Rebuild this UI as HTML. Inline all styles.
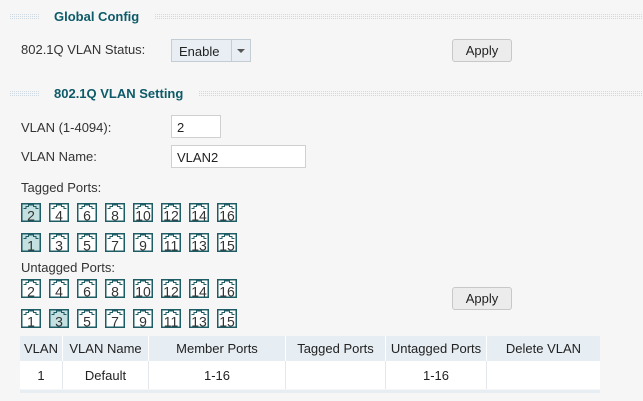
<!DOCTYPE html>
<html><head><style>
body{margin:0;width:643px;height:401px;background:#f6f6f6;font-family:"Liberation Sans",sans-serif;font-size:13px;color:#333;position:relative;overflow:hidden}
.a{position:absolute}
.hd{font-weight:bold;color:#0d5a68;font-size:13px}
.dot{position:absolute;height:5px;background-image:linear-gradient(90deg,#c6d3dd 1px,transparent 1px);background-size:2px 2px;opacity:.8}
.dot:after{content:"";position:absolute;inset:0;background-image:linear-gradient(0deg,#f6f6f6 1px,transparent 1px);background-size:2px 2px}
.btn{position:absolute;width:58px;height:21px;border:1px solid #c8c8c8;border-radius:3px;background:#ececec;text-align:center;line-height:21px;font-size:13px;color:#222}
.inp{position:absolute;background:#fff;border:1px solid #d0d0d0;height:23px;line-height:23px;padding-left:5px;font-size:13px;color:#222;box-sizing:border-box}
.p{position:absolute;width:20px;height:19px}
table{position:absolute;left:20px;top:336px;border-collapse:collapse;width:580px;font-size:13px;color:#222}
td{text-align:center;border-right:1px solid #e4e8ec;padding:0}
tr.h td{background:#e6edf3;height:25px;border-right:1px solid #fff}
tr.b td{background:#fff;height:28px}
</style></head><body>
<div class="dot" style="left:10px;top:14px;width:30px"></div>
<div class="a hd" style="left:54px;top:9px">Global Config</div>
<div class="dot" style="left:155px;top:14px;width:488px"></div>
<div class="a" style="left:21px;top:42px">802.1Q VLAN Status:</div>
<div class="a" style="left:171px;top:39px;width:80px;height:23px;border:1px solid #c4ccd4;background:#e8eef3;box-sizing:border-box">
<span class="a" style="left:7px;top:4px;color:#222">Enable</span>
<div class="a" style="left:59px;top:0;width:1px;height:21px;background:#c4ccd4"></div>
<div class="a" style="left:65px;top:9px;width:0;height:0;border-left:4px solid transparent;border-right:4px solid transparent;border-top:4px solid #555"></div></div>
<div class="btn" style="left:452px;top:39px">Apply</div>
<div class="dot" style="left:10px;top:91px;width:30px"></div>
<div class="a hd" style="left:54px;top:86px">802.1Q VLAN Setting</div>
<div class="dot" style="left:199px;top:91px;width:444px"></div>
<div class="a" style="left:21px;top:120px">VLAN (1-4094):</div>
<div class="inp" style="left:171px;top:115px;width:50px">2</div>
<div class="a" style="left:21px;top:149px">VLAN Name:</div>
<div class="inp" style="left:171px;top:145px;width:135px">VLAN2</div>
<div class="a" style="left:21px;top:180px">Tagged Ports:</div>
<div class="a" style="left:21px;top:260px">Untagged Ports:</div>
<div class="btn" style="left:452px;top:287px">Apply</div>
<div id="ports"></div>
<table><tr class="h"><td style="width:42px">VLAN</td><td style="width:85px">VLAN Name</td><td style="width:136px">Member Ports</td><td style="width:99px">Tagged Ports</td><td style="width:100px">Untagged Ports</td><td style="border-right:none">Delete VLAN</td></tr>
<tr class="b"><td>1</td><td>Default</td><td>1-16</td><td></td><td>1-16</td><td style="border-right:none"></td></tr></table>
<div class="a" style="left:20px;top:390px;width:580px;height:3px;background:#e6edf3"></div>
<script>
var rows=[[203,[2,4,6,8,10,12,14,16],[2]],[233,[1,3,5,7,9,11,13,15],[1]],[279,[2,4,6,8,10,12,14,16],[]],[309,[1,3,5,7,9,11,13,15],[3]]];
var h='';rows.forEach(function(r){r[1].forEach(function(n,i){var x=21+i*28;var sel=r[2].indexOf(n)>=0;
h+='<svg class="p" style="left:'+x+'px;top:'+r[0]+'px" width="20" height="19" viewBox="0 0 20 19"><rect x="0.75" y="0.75" width="18.5" height="17.5" fill="'+(sel?'#c4e0e0':'#fff')+'" stroke="#1e5c66" stroke-width="1.5"/><path d="M2.5 5.5H5V3.5H7.5V2H12.5V3.5H15V5.5H17.5" fill="none" stroke="#1e5c66" stroke-width="1"/><text x="10" y="17.5" text-anchor="middle" font-family="Liberation Sans" font-size="14" fill="#333">'+n+'</text></svg>';});});
document.getElementById('ports').innerHTML=h;
</script>
</body></html>
